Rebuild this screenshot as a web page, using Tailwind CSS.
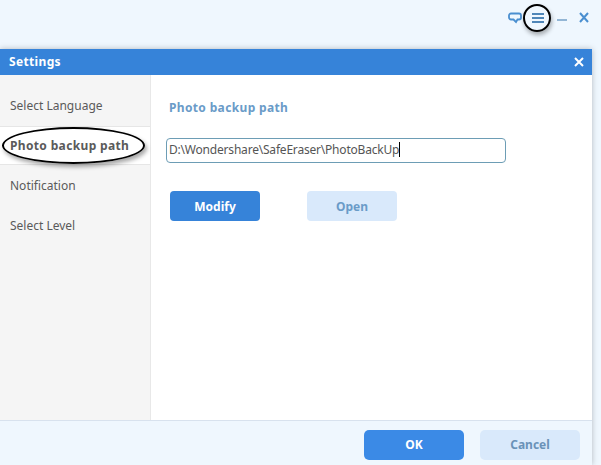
<!DOCTYPE html>
<html lang="en">
<head>
    <meta charset="UTF-8">
    <title>Settings</title>
    <script src="https://cdn.jsdelivr.net/npm/@tailwindcss/browser@4"></script>
</head>
<body class="bg-[#eff7fe] font-['Noto_Sans',sans-serif] text-[12px]">
    <div class="relative w-[601px] h-[465px] overflow-hidden flex flex-col">
        <!-- Top window controls -->
        <header class="h-[49px] shrink-0 flex justify-end items-start pt-[12px] pr-[12px]">
            <svg width="14" height="12" viewBox="0 0 14 12" fill="none" stroke="#4a8fd0" stroke-width="1.8"><path d="M3 1.500h8a2 2 0 0 1 2 2v2a2 2 0 0 1-2 2h-1.500l-1.500 2.500-2.500-2.500H3a2 2 0 0 1-2-2v-2a2 2 0 0 1 2-2z"/></svg>
            <svg width="12" height="12" viewBox="0 0 12 12" fill="none" stroke="#4f86b8" stroke-width="2" class="ml-[10px]"><path d="M0 2h12M0 6h12M0 10h12"/></svg>
            <svg width="10" height="12" viewBox="0 0 10 12" fill="none" stroke="#7ba5cb" stroke-width="1.6" class="ml-[13px]"><path d="M0 8h10"/></svg>
            <svg width="10" height="12" viewBox="0 0 10 12" fill="none" stroke="#4a8fd0" stroke-width="2" class="ml-[12px]"><path d="M1 1l8 9M9 1l-8 9"/></svg>
        </header>

        <!-- Dialog -->
        <div class="w-[592px] flex-1 flex flex-col bg-white shadow-[0_0_6px_rgba(0,0,0,0.25)]">
            <div class="h-[26px] shrink-0 bg-[#3683d9] flex items-center justify-between pl-[9px] pr-[8px] text-white font-bold tracking-[0.35px]">
                <span>Settings</span>
                <svg width="10" height="10" viewBox="0 0 10 10" fill="none" stroke="#fff" stroke-width="2"><path d="M1 1l8 8M9 1l-8 8"/></svg>
            </div>

            <div class="flex-1 flex">
                <!-- Sidebar -->
                <aside class="w-[151px] shrink-0 bg-[#f5f5f5] border-r border-[#e8e8e8] text-[#5a5a5a]">
                    <div class="h-[51px] pl-[10px] pt-[23px] leading-[16px]">Select Language</div>
                    <div class="h-[39px] pl-[10px] flex items-center bg-white font-bold tracking-[0.35px] border-y border-[#e6e6e6]">Photo backup path</div>
                    <div class="h-[40px] pl-[10px] flex items-center pt-[2px]">Notification</div>
                    <div class="h-[40px] pl-[10px] flex items-center pt-[2px]">Select Level</div>
                </aside>

                <!-- Content -->
                <main class="flex-1 pl-[15px]">
                    <h2 class="mt-[25px] ml-[3px] font-bold tracking-[0.35px] text-[#6a9bc8] leading-[16px]">Photo backup path</h2>
                    <div class="mt-[22px] w-[340px] h-[25px] border border-[#6d9db5] rounded-[4px] flex items-center pl-[2px] pb-[2px] text-[#555] tracking-[-0.2px]">
                        <span>D:\Wondershare\SafeEraser\PhotoBackUp</span><span class="w-px h-[15px] bg-black"></span>
                    </div>
                    <div class="mt-[28px] ml-[4px] flex gap-[47px] font-bold">
                        <button class="w-[90px] h-[30px] rounded-[4px] bg-[#3683d9] text-white pt-[1px]">Modify</button>
                        <button class="w-[90px] h-[30px] rounded-[4px] bg-[#d9e9fb] text-[#6a9bc8] pt-[1px]">Open</button>
                    </div>
                </main>
            </div>

            <footer class="h-[45px] shrink-0 bg-[#eff7fe] border-t border-[#d8e2ee] flex justify-end items-start pt-[9px] pr-[12px] gap-[16px] font-bold">
                <button class="w-[100px] h-[30px] rounded-[5px] bg-[#3b8ae6] text-white">OK</button>
                <button class="w-[100px] h-[30px] rounded-[5px] bg-[#d9e9fb] text-[#6a92b8]">Cancel</button>
            </footer>
        </div>

        <!-- Hand-drawn annotations over the screenshot -->
        <div class="absolute left-[2px] top-[127px] w-[143px] h-[37px] rounded-[50%] border-2 border-black shadow-[2px_3px_4px_rgba(0,0,0,0.35)]"></div>
        <div class="absolute left-[523px] top-[4px] w-[28px] h-[28px] rounded-full border-2 border-black shadow-[1px_3px_4px_rgba(0,0,0,0.3)]"></div>
    </div>
</body>
</html>
